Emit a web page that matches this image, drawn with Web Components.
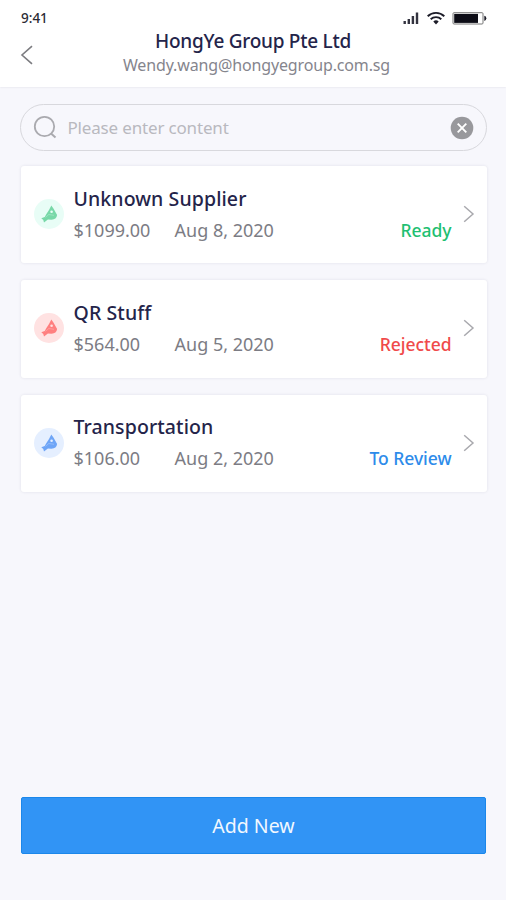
<!DOCTYPE html>
<html lang="en">
<head>
<meta charset="utf-8">
<meta name="viewport" content="width=device-width, initial-scale=1">
<title>HongYe Group Pte Ltd</title>
<style>
  body {
    margin: 0;
    background: #f7f7fc;
    font-family: "Noto Sans", "Open Sans", sans-serif;
  }
</style>
</head>
<body>
<expense-app>
  <app-header slot="header" time="9:41">
    <span slot="title">HongYe Group Pte Ltd</span>
    <span slot="email">Wendy.wang@hongyegroup.com.sg</span>
  </app-header>
  <search-box placeholder="Please enter content"></search-box>
  <expense-card status="ready">
    <span slot="name">Unknown Supplier</span>
    <span slot="amount">$1099.00</span>
    <span slot="date">Aug 8, 2020</span>
    <span slot="status">Ready</span>
  </expense-card>
  <expense-card status="rejected">
    <span slot="name">QR Stuff</span>
    <span slot="amount">$564.00</span>
    <span slot="date">Aug 5, 2020</span>
    <span slot="status">Rejected</span>
  </expense-card>
  <expense-card status="review">
    <span slot="name">Transportation</span>
    <span slot="amount">$106.00</span>
    <span slot="date">Aug 2, 2020</span>
    <span slot="status">To Review</span>
  </expense-card>
  <action-button slot="footer">Add New</action-button>
</expense-app>
<script>
(function () {
'use strict';

function define(name, html, setup) {
    const template = document.createElement('template');
    template.innerHTML = html;
    window.customElements.define(name, class extends HTMLElement {
        constructor() {
            super();
            this.attachShadow({ mode: 'open' }).appendChild(document.importNode(template.content, true));
        }
        connectedCallback() {
            if (setup) {
                setup(this, this.shadowRoot);
            }
        }
    });
}

define('expense-app', `<style>
    :host{
      display: flex;
      flex-direction: column;
      box-sizing: border-box;
      height: 900px;
      padding-bottom: 46px;
    }
    main{
      flex: 1;
      display: flex;
      flex-direction: column;
      gap: 17px;
      padding: 17px 19px 0 20px;
    }
    footer{
      padding: 0 20px 0 21px;
    }
  </style>
  <slot name="header"></slot>
  <main><slot></slot></main>
  <footer><slot name="footer"></slot></footer>
`);

define('status-bar', `<style>
    :host{
      display: flex;
      align-items: center;
      justify-content: space-between;
      height: 35px;
      padding: 0 19px 0 21px;
      box-sizing: border-box;
      color: #2a2a34;
      font-size: 13.5px;
      font-weight: 500;
    }
    svg{
      display: block;
    }
  </style>
  <slot></slot>
  <svg width="84" height="16" viewBox="0 0 84 16">
    <g fill="#33333f">
      <rect x="0.5" y="11" width="2.4" height="3"/>
      <rect x="4.6" y="9" width="2.4" height="5"/>
      <rect x="8.7" y="6" width="2.4" height="8"/>
      <rect x="12.8" y="2.5" width="2.4" height="11.5"/>
    </g>
    <g fill="none" stroke="#1c1c28" stroke-width="1.9">
      <path d="M24.7 6.2a12 12 0 0 1 16.6 0"/>
      <path d="M27.7 9.3a7.6 7.6 0 0 1 10.6 0"/>
    </g>
    <path d="M33 14.4l-2.700-2.800a4 4 0 0 1 5.400 0z" fill="#1c1c28"/>
    <rect x="50" y="2.7" width="30" height="11.3" rx="1" fill="#fff" stroke="#777" stroke-width="1"/>
    <rect x="51.2" y="3.9" width="23.8" height="9" fill="#0c0c16"/>
    <path d="M81.3 5.7q2 .3 2 2.6t-2 2.6z" fill="#1c1c28"/>
  </svg>
`);

define('app-header', `<style>
    :host{
      display: block;
      height: 87px;
      background: #fff;
      box-shadow: 0 0 2px rgba(40, 40, 70, .13);
    }
    nav{
      display: grid;
      grid-template-columns: 40px 1fr 40px;
      align-items: center;
      height: 48px;
      margin-top: -5px;
    }
    svg{
      display: block;
      margin: 2px 0 0 20px;
    }
    .titles{
      text-align: center;
      white-space: nowrap;
    }
    .title{
      color: #24244a;
      font-size: 19px;
      letter-spacing: -.26px;
      line-height: 23px;
      font-weight: 500;
    }
    .email{
      padding-left: 7px;
      color: #85858d;
      font-size: 16px;
      letter-spacing: -.14px;
      line-height: 25px;
    }
  </style>
  <status-bar></status-bar>
  <nav>
    <svg width="14" height="20" viewBox="0 0 14 20">
      <path d="M12 1.2L2 10l10 8.8" fill="none" stroke="#7c7c80" stroke-width="1.6"/>
    </svg>
    <div class="titles">
      <div class="title"><slot name="title"></slot></div>
      <div class="email"><slot name="email"></slot></div>
    </div>
  </nav>
`, (host, root) => {
    root.querySelector('status-bar').textContent = host.getAttribute('time');
});

define('search-box', `<style>
    :host{
      display: flex;
      align-items: center;
      box-sizing: border-box;
      height: 47px;
      padding: 0 12.5px 0 12px;
      border: 1.5px solid #d8d8dd;
      border-radius: 24px;
      margin-bottom: -2px;
    }
    span{
      flex: 1;
      margin-left: 9.5px;
      color: #b9b9bf;
      font-size: 17px;
      letter-spacing: -.17px;
      white-space: nowrap;
    }
    svg{
      display: block;
    }
  </style>
  <svg width="25" height="25" viewBox="0 0 25 25">
    <circle cx="11.5" cy="11.5" r="9.7" fill="none" stroke="#aaaaaf" stroke-width="1.8"/>
    <path d="M18 18.5l4.500 4" stroke="#aaaaaf" stroke-width="2"/>
  </svg>
  <span></span>
  <svg width="24" height="24" viewBox="0 0 24 24">
    <circle cx="12" cy="12" r="11.3" fill="#98989c"/>
    <path d="M7.7 7.7l8.600 8.600M16.300 7.700l-8.600 8.600" stroke="#fff" stroke-width="1.9"/>
  </svg>
`, (host, root) => {
    root.querySelector('span').textContent = host.getAttribute('placeholder');
});

define('expense-card', `<style>
    :host{
      display: grid;
      grid-template-columns: 30px 1fr 12px;
      align-items: center;
      column-gap: 11px;
      box-sizing: border-box;
      height: 97.3px;
      margin: 0 .5px 0 1px;
      padding: 0 12px 1px 12.5px;
      border-radius: 3px;
      background: #fff;
      box-shadow: 0 0 3px rgba(60, 60, 100, .12);
      --tone: #1fbf72;
      --icon: #78d8a8;
      --halo: #e8fdf6;
    }
    :host([status="rejected"]){
      --tone: #f04a4a;
      --icon: #ff7f7f;
      --halo: #ffe2e2;
    }
    :host([status="review"]){
      --tone: #2d8bea;
      --icon: #6ea5f7;
      --halo: #e5efff;
    }
    svg{
      display: block;
    }
    .info{
      margin-left: -1px;
    }
    .name{
      color: #24244a;
      font-size: 19.5px;
      letter-spacing: .1px;
      line-height: 32px;
      font-weight: 500;
    }
    .row{
      display: grid;
      grid-template-columns: 101px 1fr auto;
      color: #7c7c84;
      font-size: 18px;
      line-height: 31px;
      white-space: nowrap;
    }
    .status{
      color: var(--tone);
      font-size: 17.5px;
      font-weight: 500;
      letter-spacing: -.05px;
    }
  </style>
  <svg width="30" height="30" viewBox="0 0 30 30">
    <circle cx="15" cy="15" r="15" fill="var(--halo)"/>
    <path d="M17.3 6.5l2.300 3.300 3.500 6.200q-.6 4.500-5.600 4.700l-3.600-.3-3.900 3-.7-2.400-2-1.800 3.400-1.300 1.700-3 2.600-3.900z" fill="var(--icon)"/>
    <circle cx="17.6" cy="12.8" r="1.3" fill="var(--halo)"/>
    <path d="M11.5 18.3l3.300-2.800 5.200.8" fill="none" stroke="var(--halo)" stroke-width=".6" opacity=".5"/>
  </svg>
  <div class="info">
    <div class="name"><slot name="name"></slot></div>
    <div class="row">
      <slot name="amount"></slot>
      <slot name="date"></slot>
      <div class="status"><slot name="status"></slot></div>
    </div>
  </div>
  <svg width="12" height="18" viewBox="0 0 12 18">
    <path d="M1.2 1.2L10 9l-8.800 7.800" fill="none" stroke="#a9a9ae" stroke-width="1.5"/>
  </svg>
`);

define('action-button', `<style>
    :host{
      display: flex;
      align-items: center;
      justify-content: center;
      box-sizing: border-box;
      height: 57px;
      border: 1.5px solid #1b87ea;
      border-radius: 2px;
      background: #3194f5;
      color: #f2f8ff;
      font-size: 19.5px;
    }
  </style>
  <slot></slot>
`);

}());
</script>
</body>
</html>
